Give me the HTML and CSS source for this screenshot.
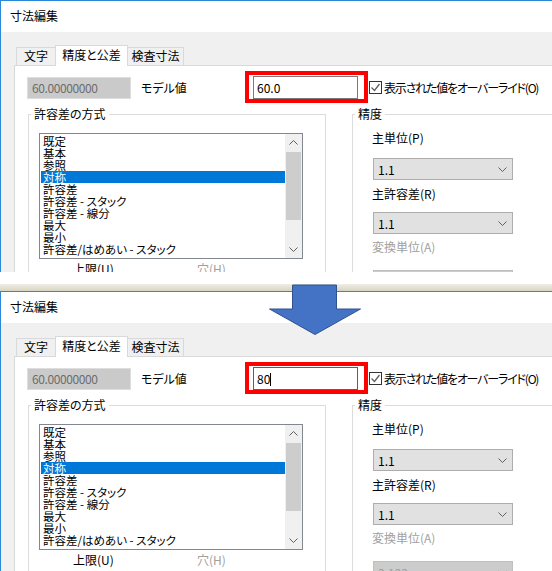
FILE: index.html
```html
<!DOCTYPE html>
<html lang="ja">
<head>
  <meta charset="UTF-8">
  <meta name="viewport" content="width=device-width, initial-scale=1.0">
  <title>寸法編集</title>
  <link rel="stylesheet" href="styles.css">
</head>
<body>
<div class="window first">
  <div class="titlebar">寸法編集</div>
  <div class="dialog">
    <div class="tabs">
      <div class="tab tab-text">文字</div>
      <div class="tab tab-precision active">精度と公差</div>
      <div class="tab tab-check">検査寸法</div>
    </div>
    <div class="tab-panel">
      <div class="value-row">
        <div class="readonly">60.00000000</div>
        <span class="value-label">モデル値</span>
        <div class="marked">
          <div class="textbox">60.0</div>
        </div>
        <span class="checkbox"><svg width="11" height="11" viewBox="0 0 11 11"><polyline points="1.5,5.5 4.5,8.5 9.5,2" fill="none" stroke="#5f5f5f" stroke-width="1.3"/></svg></span>
        <span class="check-label">表示された値をオーバーライド(O)</span>
      </div>
      <div class="groups">
        <fieldset class="group method">
          <legend>許容差の方式</legend>
          <div class="listbox">
            <ul class="items">
              <li>既定</li>
              <li>基本</li>
              <li>参照</li>
              <li class="selected">対称</li>
              <li>許容差</li>
              <li>許容差 - スタック</li>
              <li>許容差 - 線分</li>
              <li>最大</li>
              <li>最小</li>
              <li>許容差/はめあい - スタック</li>
            </ul>
            <div class="scrollbar">
              <span class="sb-arrow"><svg width="9" height="5" viewBox="0 0 9 5"><polyline points="0.5,4.5 4.5,0.5 8.5,4.5" fill="none" stroke="#606060"/></svg></span>
              <span class="sb-thumb"></span>
              <span class="sb-arrow down"><svg width="9" height="5" viewBox="0 0 9 5"><polyline points="0.5,0.5 4.5,4.5 8.5,0.5" fill="none" stroke="#606060"/></svg></span>
            </div>
          </div>
          <div class="limits">
            <span class="upper">上限(U)</span>
            <span class="muted">穴(H)</span>
          </div>
        </fieldset>
        <fieldset class="group precision">
          <legend>精度</legend>
          <div class="group-body">
            <div class="field-label first-label">主単位(P)</div>
            <div class="combo combo-unit">1.1<svg width="9" height="5" viewBox="0 0 9 5"><polyline points="0.5,0.5 4.5,4.5 8.5,0.5" fill="none" stroke="#606060"/></svg></div>
            <div class="field-label">主許容差(R)</div>
            <div class="combo combo-tol">1.1<svg width="9" height="5" viewBox="0 0 9 5"><polyline points="0.5,0.5 4.5,4.5 8.5,0.5" fill="none" stroke="#606060"/></svg></div>
            <div class="field-label muted alt-label">変換単位(A)</div>
            <div class="combo combo-alt disabled">3.123<svg width="9" height="5" viewBox="0 0 9 5"><polyline points="0.5,0.5 4.5,4.5 8.5,0.5" fill="none" stroke="#b0b0b0"/></svg></div>
          </div>
        </fieldset>
      </div>
    </div>
  </div>
</div>

<div class="spacer"></div>
<div class="taskbar"></div>

<div class="window second">
  <div class="titlebar">寸法編集</div>
  <div class="dialog">
    <div class="tabs">
      <div class="tab tab-text">文字</div>
      <div class="tab tab-precision active">精度と公差</div>
      <div class="tab tab-check">検査寸法</div>
    </div>
    <div class="tab-panel">
      <div class="value-row">
        <div class="readonly">60.00000000</div>
        <span class="value-label">モデル値</span>
        <div class="marked">
          <div class="textbox focused">80<span class="caret"></span></div>
        </div>
        <span class="checkbox"><svg width="11" height="11" viewBox="0 0 11 11"><polyline points="1.5,5.5 4.5,8.5 9.5,2" fill="none" stroke="#5f5f5f" stroke-width="1.3"/></svg></span>
        <span class="check-label">表示された値をオーバーライド(O)</span>
      </div>
      <div class="groups">
        <fieldset class="group method">
          <legend>許容差の方式</legend>
          <div class="listbox">
            <ul class="items">
              <li>既定</li>
              <li>基本</li>
              <li>参照</li>
              <li class="selected">対称</li>
              <li>許容差</li>
              <li>許容差 - スタック</li>
              <li>許容差 - 線分</li>
              <li>最大</li>
              <li>最小</li>
              <li>許容差/はめあい - スタック</li>
            </ul>
            <div class="scrollbar">
              <span class="sb-arrow"><svg width="9" height="5" viewBox="0 0 9 5"><polyline points="0.5,4.5 4.5,0.5 8.5,4.5" fill="none" stroke="#606060"/></svg></span>
              <span class="sb-thumb"></span>
              <span class="sb-arrow down"><svg width="9" height="5" viewBox="0 0 9 5"><polyline points="0.5,0.5 4.5,4.5 8.5,0.5" fill="none" stroke="#606060"/></svg></span>
            </div>
          </div>
          <div class="limits">
            <span class="upper">上限(U)</span>
            <span class="muted">穴(H)</span>
          </div>
        </fieldset>
        <fieldset class="group precision">
          <legend>精度</legend>
          <div class="group-body">
            <div class="field-label first-label">主単位(P)</div>
            <div class="combo combo-unit">1.1<svg width="9" height="5" viewBox="0 0 9 5"><polyline points="0.5,0.5 4.5,4.5 8.5,0.5" fill="none" stroke="#606060"/></svg></div>
            <div class="field-label">主許容差(R)</div>
            <div class="combo combo-tol">1.1<svg width="9" height="5" viewBox="0 0 9 5"><polyline points="0.5,0.5 4.5,4.5 8.5,0.5" fill="none" stroke="#606060"/></svg></div>
            <div class="field-label muted alt-label">変換単位(A)</div>
            <div class="combo combo-alt disabled">3.123<svg width="9" height="5" viewBox="0 0 9 5"><polyline points="0.5,0.5 4.5,4.5 8.5,0.5" fill="none" stroke="#b0b0b0"/></svg></div>
          </div>
        </fieldset>
      </div>
    </div>
  </div>
</div>

<!-- down arrow between the two shots -->
<svg class="arrow" width="94" height="52" viewBox="0 0 94 52">
  <path d="M24.5 1 H68.5 V25 H92.5 L47 50.5 L1.5 25 H24.5 Z" fill="#4472c4" stroke="#2f528f"/>
</svg>
</body>
</html>
```

FILE: styles.css
```css
* {
  box-sizing: border-box;
}
body {
  position: relative;
  width: 552px;
  height: 571px;
  margin: 0;
  overflow: hidden;
  background-color: #fff;
  font-family: "Noto Sans CJK JP", sans-serif;
  font-size: 12px;
  font-feature-settings: "palt";
  color: #000;
}
.window {
  overflow: hidden;
  border-top: 1px solid #2b88d8;
  border-left: 1px solid #2b88d8;
  background-color: #f0f0f0;
}
.window.first {
  height: 272px;
}
.window.second {
  height: 280px;
}
.titlebar {
  height: 31px;
  padding-left: 9px;
  line-height: 30px;
  background-color: #fff;
}
.dialog {
  padding-top: 13px;
}
.spacer {
  height: 12px;
}
.taskbar {
  height: 7px;
  background: linear-gradient(#efeee5, #d7d4c2);
}

/* tabs */
.tabs {
  display: flex;
  align-items: flex-end;
  height: 20px;
  padding-left: 15px;
}
.tab {
  height: 18px;
  line-height: 16px;
  text-align: center;
  border: 1px solid #d9d9d9;
  border-bottom: none;
  background-color: #f0f0f0;
}
.tab-text {
  width: 40px;
}
.tab-precision {
  width: 73px;
  margin-left: -1px;
}
.tab-check {
  width: 57px;
  margin-left: -1px;
}
.tab.active {
  position: relative;
  z-index: 1;
  height: 21px;
  margin-bottom: -1px;
  line-height: 18px;
  background-color: #fff;
}
.tab-panel {
  height: 320px;
  margin-left: 13px;
  padding: 10px 0 0 12px;
  border-top: 1px solid #d9d9d9;
  border-left: 1px solid #d9d9d9;
  background-color: #fff;
}

/* model value row */
.value-row {
  display: flex;
  align-items: center;
  height: 23px;
  white-space: nowrap;
}
.readonly {
  width: 104px;
  height: 22px;
  padding-left: 4px;
  line-height: 20px;
  letter-spacing: -0.4px;
  border: 1px solid #dedede;
  background-color: #cacaca;
  color: #6d6d6d;
}
.value-label {
  width: 112px;
  margin-left: 10px;
}
.marked {
  position: relative;
}
.marked::after {
  content: "";
  position: absolute;
  left: -8px;
  top: -5px;
  right: -10px;
  bottom: -4px;
  border: 4px solid #ff0000;
}
.textbox {
  width: 105px;
  height: 23px;
  padding-left: 3px;
  line-height: 21px;
  border: 1px solid #7a7a7a;
  background-color: #fff;
}
.textbox.focused {
  border-color: #0078d7;
}
.caret {
  display: inline-block;
  width: 1px;
  height: 13px;
  vertical-align: -2px;
  background-color: #000;
}
.checkbox {
  display: flex;
  flex-shrink: 0;
  align-items: center;
  justify-content: center;
  width: 13px;
  height: 13px;
  margin-left: 11px;
  border: 1px solid #333;
  background-color: #fff;
}
.check-label {
  flex-shrink: 0;
  margin-left: 2px;
  letter-spacing: -1.2px;
}

/* group boxes */
.groups {
  display: flex;
  margin-top: 7px;
  padding-left: 1px;
}
.group {
  height: 220px;
  min-width: 0;
  margin: 0;
  padding: 0;
  border: 1px solid #dcdcdc;
}
.group legend {
  margin-left: 2px;
  padding: 0 3px;
  line-height: 16px;
}
.group.method {
  width: 298px;
}
.group.precision {
  flex: 1;
  margin-left: 26px;
  border-right: none;
}
.group-body {
  padding-left: 19px;
}
.muted {
  color: #a0a0a0;
}

.listbox {
  display: flex;
  width: 264px;
  height: 126px;
  margin: 11px 0 0 10px;
  border: 1px solid #828790;
  background-color: #fff;
}
.items {
  flex: 1;
  margin: 0;
  padding: 1px 0 0 1px;
  overflow: hidden;
  list-style: none;
  font-size: 11.5px;
  line-height: 12px;
}
.items li {
  height: 12px;
  padding-left: 2px;
  white-space: nowrap;
}
.items li.selected {
  background-color: #0078d7;
  color: #fff;
}
.scrollbar {
  display: flex;
  flex-direction: column;
  width: 17px;
  background-color: #f0f0f0;
}
.sb-arrow {
  display: flex;
  align-items: center;
  justify-content: center;
  height: 17px;
}
.sb-arrow.down {
  margin-top: auto;
}
.sb-thumb {
  height: 68px;
  margin: 1px 1px 0;
  background-color: #cdcdcd;
}
.limits {
  display: flex;
  margin-top: 2px;
  padding-left: 44px;
  line-height: 16px;
}
.limits .upper {
  width: 124px;
}

.field-label {
  margin-top: 6px;
  line-height: 16px;
}
.field-label.first-label {
  margin-top: 8px;
}
.field-label.alt-label {
  margin-top: 5px;
}
.combo {
  display: flex;
  align-items: center;
  justify-content: space-between;
  width: 140px;
  height: 22px;
  margin-left: 1px;
  padding: 0 5px 0 4px;
  border: 1px solid #adadad;
  background-color: #e1e1e1;
}
.combo-unit {
  margin-top: 12px;
}
.combo-tol {
  margin-top: 10px;
}
.combo-alt {
  margin-top: 15px;
}
.combo.disabled {
  border-color: #bfbfbf;
  background-color: #cccccc;
  color: #a0a0a0;
}

.arrow {
  position: absolute;
  left: 268px;
  top: 283.5px;
}
```
